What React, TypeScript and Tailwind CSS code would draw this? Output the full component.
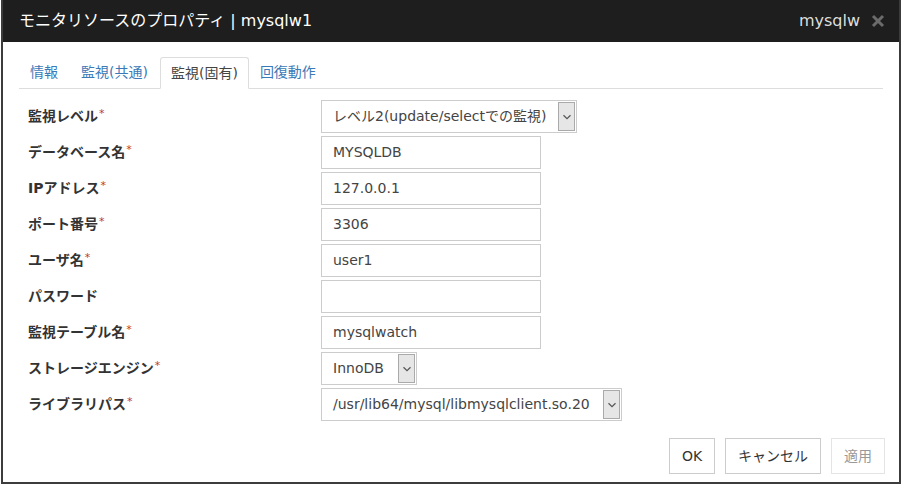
import React from 'react';

const font = { fontFamily: '"DejaVu Sans", "Noto Sans CJK JP", sans-serif' };

const Req = () => <sup className="text-[#c0392b] text-[11px] font-normal relative top-[-4px] ml-[1px]">*</sup>;

const Chevron = () => (
  <svg width="10" height="6" viewBox="0 0 10 6" fill="none">
    <path d="M1.5 1.2 L5 4.6 L8.5 1.2" stroke="#555" strokeWidth="1.2" />
  </svg>
);

const TextBox = ({ value }: { value: string }) => (
  <div className="w-[220px] h-[33px] border border-[#ccc] bg-white flex items-center px-[11px] text-[14px] text-[#444]">
    {value}
  </div>
);

const SelectBox = ({ value, width }: { value: string; width: string }) => (
  <div className={`${width} h-[33px] border border-[#ccc] bg-white flex items-stretch`}>
    <div className="flex-1 flex items-center px-[11px] text-[14px] text-[#444] whitespace-nowrap">{value}</div>
    <div className="w-[17px] my-[1px] mr-[1px] bg-[#e6e6e6] border border-[#aaa] flex items-center justify-center">
      <Chevron />
    </div>
  </div>
);

const rows: { label: string; req: boolean; field: React.ReactNode }[] = [
  { label: '監視レベル', req: true, field: <SelectBox value="レベル2(update/selectでの監視)" width="w-[256px]" /> },
  { label: 'データベース名', req: true, field: <TextBox value="MYSQLDB" /> },
  { label: 'IPアドレス', req: true, field: <TextBox value="127.0.0.1" /> },
  { label: 'ポート番号', req: true, field: <TextBox value="3306" /> },
  { label: 'ユーザ名', req: true, field: <TextBox value="user1" /> },
  { label: 'パスワード', req: false, field: <TextBox value="" /> },
  { label: '監視テーブル名', req: true, field: <TextBox value="mysqlwatch" /> },
  { label: 'ストレージエンジン', req: true, field: <SelectBox value="InnoDB" width="w-[96px]" /> },
  { label: 'ライブラリパス', req: true, field: <SelectBox value="/usr/lib64/mysql/libmysqlclient.so.20" width="w-[301px]" /> },
];

export default function App() {
  return (
    <div className="w-[904px] h-[486px] bg-white" style={font}>
      <div className="w-[900px] h-[484px] ml-[1px] border-x-2 border-b-2 border-[#3c3c3c] flex flex-col">
        <div className="h-[42px] bg-[#1e1e1e] flex items-center justify-between pl-[16px] pr-[14px]">
          <span className="text-white text-[16px]">モニタリソースのプロパティ | mysqlw1</span>
          <div className="flex items-center gap-[11px]">
            <span className="text-[#ddd] text-[16px]">mysqlw</span>
            <svg width="14" height="14" viewBox="0 0 14 14">
              <path d="M2 2 L12 12 M12 2 L2 12" stroke="#6b6b6b" strokeWidth="3" />
            </svg>
          </div>
        </div>

        <div className="mx-[16px] mt-[15px] h-[32px] border-b border-[#ddd] flex items-end text-[14px]">
          <div className="px-[11px] h-[31px] flex items-center text-[#3a7ab8]">情報</div>
          <div className="px-[12px] h-[31px] flex items-center text-[#3a7ab8]">監視(共通)</div>
          <div className="px-[10px] h-[32px] mb-[-1px] flex items-center text-[#444] bg-white border border-[#ddd] border-b-white rounded-t-[3px]">監視(固有)</div>
          <div className="px-[11px] h-[31px] flex items-center text-[#3a7ab8]">回復動作</div>
        </div>

        <div className="mt-[11px] pl-[25px] flex flex-col gap-[3px]">
          {rows.map((r, i) => (
            <div key={i} className="flex items-center">
              <div className="w-[293px] text-[14px] font-bold text-[#333]">
                {r.label}
                {r.req && <Req />}
              </div>
              {r.field}
            </div>
          ))}
        </div>

        <div className="mt-[17px] mr-[14px] flex justify-end gap-[10px] text-[14px]">
          <div className="w-[46px] h-[36px] border border-[#ccc] flex items-center justify-center text-[#333]">OK</div>
          <div className="w-[96px] h-[36px] border border-[#ccc] flex items-center justify-center text-[#333]">キャンセル</div>
          <div className="w-[54px] h-[36px] border border-[#e4e4e4] flex items-center justify-center text-[#999]">適用</div>
        </div>
      </div>
    </div>
  );
}
